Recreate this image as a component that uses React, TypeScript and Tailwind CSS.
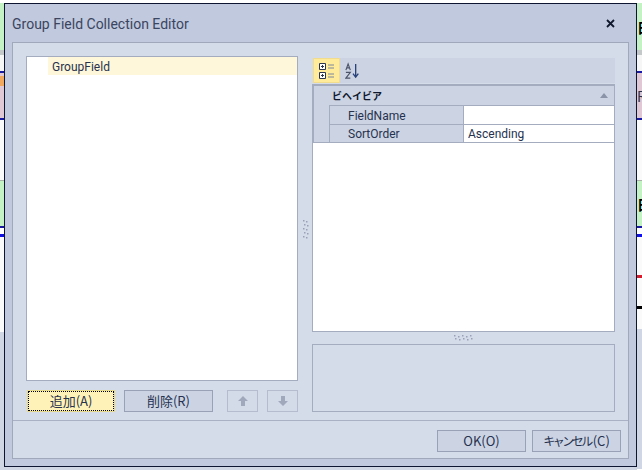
import type { ReactNode } from 'react'

const green = 'bg-[#c4f2c4]'
const pink = 'bg-[#e0c8d4]'
const navy = 'bg-[#1a1aa0]'
const paper = 'bg-[#fafafa]'
const behind = 'bg-[#d0d6e4]'

const Band = ({ h, c, children }: { h: string; c: string; children?: ReactNode }) => (
  <div className={`${h} ${c} flex items-center overflow-hidden`}>{children}</div>
)

const Clipped = ({ text }: { text: string }) => (
  <span className="text-[14px] leading-none font-bold whitespace-nowrap text-black">{text}</span>
)

const Grip = ({ vertical }: { vertical?: boolean }) => (
  <svg width={vertical ? 6 : 20} height={vertical ? 20 : 6} className="block">
    {Array.from({ length: 5 }).flatMap((_, i) =>
      [0, 1].map((j) => (
        <rect
          key={`${i}-${j}`}
          x={vertical ? j * 3 + (i % 2) : i * 4 + (j % 2)}
          y={vertical ? i * 4 + (j % 2) : j * 3 + (i % 2)}
          width="1.5"
          height="1.5"
          fill="#98a1b6"
        />
      )),
    )}
  </svg>
)

const DialogButton = ({ children, w, active }: { children: ReactNode; w: string; active?: boolean }) => (
  <button
    type="button"
    className={`h-[22px] ${w} flex items-center justify-center border text-[13px] text-[#27324f] ${
      active ? 'border-[#e6d98c] bg-[#fff2b8] outline-1 -outline-offset-2 outline-black outline-dotted' : 'border-[#98a1b5] bg-[#ccd4e4]'
    }`}
  >
    {children}
  </button>
)

const ArrowButton = ({ up }: { up?: boolean }) => (
  <button type="button" className="flex h-[22px] w-[31px] items-center justify-center border border-[#b4bccd] bg-[#d3dae8]">
    <svg width="12" height="12" viewBox="0 0 12 12" className={up ? '' : 'rotate-180'}>
      <path d="M6 1 L11 6 H8 V11 H4 V6 H1 Z" fill="#a0a8bb" />
    </svg>
  </button>
)

const PropertyRow = ({ name, value, last }: { name: string; value?: string; last?: boolean }) => (
  <div className={`flex h-[19px] bg-[#ccd4e3] pl-[15px] ${last ? 'border-b border-[#a4adc0]' : ''}`}>
    <div className="flex w-[135px] shrink-0 items-center border-x border-t border-[#a4adc0] pt-[1px] pl-[18px] font-['Roboto',sans-serif] text-[12px]">
      {name}
    </div>
    <div className="flex flex-1 items-center border-t border-[#a4adc0] bg-white pt-[1px] pl-[4px] font-['Roboto',sans-serif] text-[12px]">
      {value}
    </div>
  </div>
)

export default function App() {
  return (
    <div className="flex h-[470px] w-[642px] overflow-hidden bg-white font-['Noto_Sans_CJK_JP','Noto_Sans',sans-serif] text-[#27324f]">
      <div className="w-[4px] shrink-0">
        <Band h="h-[3px]" c="bg-white" />
        <Band h="h-[47px]" c={green} />
        <Band h="h-[5px]" c="bg-[#c4c8c8]" />
        <Band h="h-[16px]" c="bg-[#f6f6f6]" />
        <Band h="h-[2px]" c={navy} />
        <div className="flex h-[45px] flex-col bg-[#e0c8d4] pt-[3px]">
          <div className="h-[10px] bg-[#f0a860]" />
        </div>
        <Band h="h-[2px]" c={navy} />
        <Band h="h-[60px]" c={paper} />
        <Band h="h-[1px]" c="bg-[#a8b0a8]" />
        <Band h="h-[45px]" c={green} />
        <Band h="h-[2px]" c={navy} />
        <Band h="h-[6px]" c="bg-white" />
        <Band h="h-[3px]" c="bg-[#1010e0]" />
        <Band h="h-[95px]" c={paper} />
        <Band h="h-[138px]" c={behind} />
      </div>

      <div className="flex w-[633px] shrink-0 flex-col">
        <div className="h-[3px] shrink-0 bg-white" />
        <div className="flex flex-1 flex-col border border-[#0d1530] bg-[#c0c9de]">
          <div className="flex h-[38px] shrink-0 items-center justify-between pr-[21px] pl-[7px]">
            <span className="pt-[2px] font-['Roboto',sans-serif] text-[14px] text-[#3b4560]">Group Field Collection Editor</span>
            <svg width="9" height="9" viewBox="0 0 9 9">
              <path d="M1 1 L8 8 M8 1 L1 8" stroke="#10182e" strokeWidth="1.8" />
            </svg>
          </div>

          <div className="mx-[7px] mb-[7px] flex flex-1 flex-col border border-[#a0a9bc] bg-[#d4dbe9]">
            <div className="flex h-[378px] shrink-0 border-b border-[#a9b1c4] pt-[13px] pl-[13px]">
              <div className="flex w-[272px] shrink-0 flex-col">
                <div className="h-[325px] border border-[#a4adc0] bg-white">
                  <div className="ml-[21px] flex h-[18px] items-center bg-[#fff7d9] pt-[1px] pl-[4px] font-['Roboto',sans-serif] text-[12px] text-[#27324f]">
                    GroupField
                  </div>
                </div>
                <div className="mt-[9px] flex pl-[1px]">
                  <DialogButton w="w-[88px]" active>追加(A)</DialogButton>
                  <div className="ml-[9px]">
                    <DialogButton w="w-[89px]">削除(R)</DialogButton>
                  </div>
                  <div className="ml-[14px]">
                    <ArrowButton up />
                  </div>
                  <div className="ml-[9px]">
                    <ArrowButton />
                  </div>
                </div>
              </div>

              <div className="flex w-[14px] shrink-0 items-center justify-center pb-[17px] pl-[2px]">
                <Grip vertical />
              </div>

              <div className="flex w-[303px] shrink-0 flex-col">
                <div className="mt-[2px] ml-[1px] flex h-[25px] shrink-0 items-center bg-[#ccd4e3]">
                  <div className="flex h-[25px] w-[27px] items-center justify-center border border-[#f0dc8c] bg-[#ffeb99]">
                    <svg width="18" height="18" viewBox="0 0 18 18">
                      <path d="M1.5 1.5h6v6h-6zM1.5 10.5h6v6h-6z" fill="#fff" stroke="#2c3550" />
                      <path d="M3 4.5h3M4.5 3v3M3 13.5h3M4.5 12v3" stroke="#2c3550" />
                      <path d="M10 3h6M10 6h6M10 12h6M10 15h6" stroke="#7d869c" />
                    </svg>
                  </div>
                  <svg width="16" height="20" viewBox="0 0 18 20" className="ml-[5px]">
                    <path d="M1 9 L3.5 2 L6 9 M2 6.5h3" fill="none" stroke="#4a5368" strokeWidth="1.3" />
                    <path d="M1 11.5h5L1 18h5" fill="none" stroke="#4a5368" strokeWidth="1.3" />
                    <path d="M12 2v14M9 13l3 4 3-4" fill="none" stroke="#29427a" strokeWidth="1.5" />
                  </svg>
                </div>

                <div className="mt-[1px] h-[248px] shrink-0 border border-[#a4adc0] bg-white">
                  <div className="border-t border-l border-[#a4adc0]">
                    <div className="flex h-[19px] items-center justify-between bg-[#ccd4e3] pr-[6px] pl-[18px]">
                      <span className="text-[10px] font-bold text-[#10182e]">ビヘイビア</span>
                      <svg width="8" height="5" viewBox="0 0 8 5">
                        <path d="M4 0 L8 5 H0 Z" fill="#8a93a8" />
                      </svg>
                    </div>
                    <PropertyRow name="FieldName" />
                    <PropertyRow name="SortOrder" value="Ascending" last />
                  </div>
                </div>

                <div className="flex h-[12px] shrink-0 items-center justify-center">
                  <Grip />
                </div>

                <div className="h-[68px] shrink-0 border border-[#a4adc0] bg-[#d4dbe9]" />
              </div>
            </div>

            <div className="flex flex-1 items-start justify-end gap-[6px] pt-[9px] pr-[7px]">
              <DialogButton w="w-[89px]">OK(O)</DialogButton>
              <DialogButton w="w-[89px]">
                <span className="text-[12px] tracking-[-2.5px]">キャンセル</span>
                <span className="pl-[2px]">(C)</span>
              </DialogButton>
            </div>
          </div>
        </div>
        <div className="h-[3px] shrink-0 bg-[#d0d6e4]" />
      </div>

      <div className="w-[5px] shrink-0">
        <Band h="h-[3px]" c="bg-white" />
        <Band h="h-[47px]" c={green}>
          <Clipped text="日" />
        </Band>
        <Band h="h-[5px]" c="bg-[#c4c8c8]" />
        <Band h="h-[16px]" c="bg-[#f6f6f6]" />
        <Band h="h-[2px]" c={navy} />
        <Band h="h-[45px]" c={pink}>
          <span className="text-[14px] leading-none text-[#27324f]">R</span>
        </Band>
        <Band h="h-[2px]" c={navy} />
        <Band h="h-[60px]" c={paper} />
        <Band h="h-[1px]" c="bg-[#a8b0a8]" />
        <Band h="h-[45px]" c={green}>
          <Clipped text="日" />
        </Band>
        <Band h="h-[2px]" c={navy} />
        <Band h="h-[6px]" c="bg-white" />
        <Band h="h-[3px]" c="bg-[#1010e0]" />
        <Band h="h-[38px]" c={paper} />
        <Band h="h-[3px]" c="bg-[#d02030]" />
        <Band h="h-[28px]" c={paper} />
        <Band h="h-[3px]" c="bg-black" />
        <Band h="h-[20px]" c={paper} />
        <Band h="h-[140px]" c={behind} />
      </div>
    </div>
  )
}
